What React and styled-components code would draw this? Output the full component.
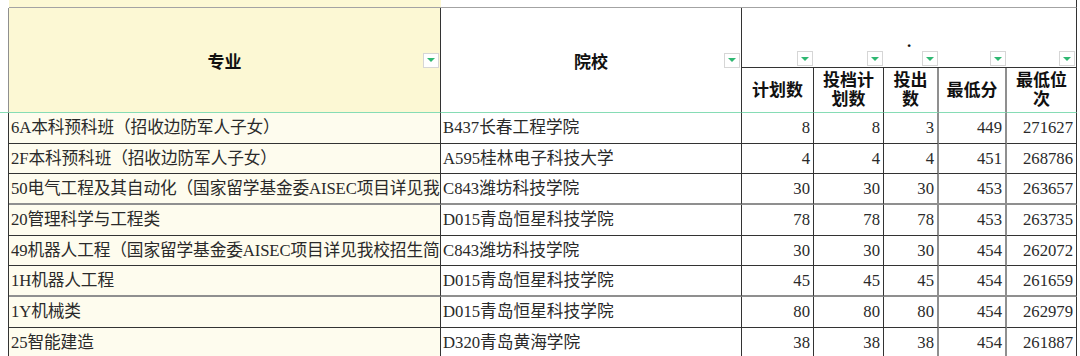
import React from "react";
import styled, { createGlobalStyle } from "styled-components";

const GlobalStyle = createGlobalStyle`
    body{
        margin: 0;
        background-color: #ffffff;
        overflow: hidden;
    }
`

const DARK = "#333333"
const SOFT = "#8f8f8f"
const GREEN = "#86dcb5"

const Sheet = styled.div`
    display: grid;
    grid-template-columns: 9px 432px 301px 72px 70px 55px 68px 70px;
    grid-template-rows: 8px 60px 45px repeat(8, 30.67px);
    font-family: "Liberation Serif", "Noto Sans CJK SC", serif;
    color: #2a2a2a;
`

const Gutter = styled.div`
    box-sizing: border-box;
    grid-row: span ${p => p.$rows || 1};
    border-right: 1px solid ${p => p.$line || "transparent"};
    border-bottom: ${p => p.$green ? `1px solid ${GREEN}` : "none"};
`

const Strip = styled.div`
    box-sizing: border-box;
    grid-column: span ${p => p.$cols || 1};
    background-color: ${p => p.$bg || "#ffffff"};
    border-bottom: 1px solid #a3a3a3;
    border-right: ${p => p.$end ? `1px solid ${DARK}` : "none"};
`

const TitleCell = styled.div`
    box-sizing: border-box;
    grid-row: span 2;
    display: grid;
    grid-template-columns: 17px 1fr 17px;
    align-items: center;
    background-color: ${p => p.$bg || "#ffffff"};
    border-right: 1px solid ${DARK};
    border-bottom: 1px solid ${GREEN};
    font-size: 17px;
    font-weight: bold;
    color: #111111;

    span{
        grid-column: 2;
        text-align: center;
    }
`

const FilterButton = styled.div`
    box-sizing: border-box;
    width: 16px;
    height: 15px;
    margin-right: 1px;
    justify-self: end;
    border: 1px solid #d6d6d6;
    background-color: #ffffff;
    display: flex;
    align-items: center;
    justify-content: center;

    &::after{
        content: "";
        border-left: 4px solid transparent;
        border-right: 4px solid transparent;
        border-top: 4px solid #2fb872;
    }
`

const MergedHead = styled.div`
    box-sizing: border-box;
    grid-column: span 5;
    display: flex;
    flex-direction: column;
    border-right: 1px solid ${DARK};
    border-bottom: 1px solid ${DARK};

    .dot{
        flex: 1;
        display: flex;
        align-items: flex-end;
        justify-content: center;
        font-size: 17px;
        font-weight: bold;
        line-height: 19px;
        color: #111111;
    }
`

const FilterRow = styled.div`
    display: grid;
    grid-template-columns: 72px 70px 55px 68px 69px;
    padding-bottom: 1px;
`

const SubHead = styled.div`
    box-sizing: border-box;
    display: flex;
    align-items: center;
    justify-content: center;
    text-align: center;
    padding: 0 3px;
    border-right: ${p => p.$soft ? `2px solid ${SOFT}` : `1px solid ${DARK}`};
    border-bottom: 1px solid ${GREEN};
    font-size: 17px;
    font-weight: bold;
    line-height: 19px;
    color: #111111;
`

const Cell = styled.div`
    box-sizing: border-box;
    display: flex;
    align-items: center;
    justify-content: ${p => p.$num ? "flex-end" : "flex-start"};
    padding: ${p => p.$num ? "1px 3px 0 0" : "1px 0 0 2px"};
    overflow: hidden;
    white-space: nowrap;
    letter-spacing: ${p => p.$cream ? "-0.12px" : "normal"};
    background-color: ${p => p.$cream ? "#fefcee" : "#ffffff"};
    border-right: ${p => p.$soft ? `2px solid ${SOFT}` : `1px solid ${DARK}`};
    border-bottom: ${p => p.$softRow ? `2px solid ${SOFT}` : `1px solid ${DARK}`};
    font-size: 16.7px;
    line-height: 1;
`

const subHeads = ["计划数", "投档计划数", "投出数", "最低分", "最低位次"]
const softCols = [false, false, true, true, false]

// long names are shown only as far as the column lets them
const rows = [
    ["6A本科预科班（招收边防军人子女）", "B437长春工程学院", 8, 8, 3, 449, 271627],
    ["2F本科预科班（招收边防军人子女）", "A595桂林电子科技大学", 4, 4, 4, 451, 268786],
    ["50电气工程及其自动化（国家留学基金委AISEC项目详见我", "C843潍坊科技学院", 30, 30, 30, 453, 263657],
    ["20管理科学与工程类", "D015青岛恒星科技学院", 78, 78, 78, 453, 263735],
    ["49机器人工程（国家留学基金委AISEC项目详见我校招生简", "C843潍坊科技学院", 30, 30, 30, 454, 262072],
    ["1H机器人工程", "D015青岛恒星科技学院", 45, 45, 45, 454, 261659],
    ["1Y机械类", "D015青岛恒星科技学院", 80, 80, 80, 454, 262979],
    ["25智能建造", "D320青岛黄海学院", 38, 38, 38, 454, 261887],
]

export default function App() {
    return (
        <>
            <GlobalStyle />
            <Sheet>
                <Gutter />
                <Strip $bg="#fcf8d4" />
                <Strip $cols={5} />
                <Strip $end />

                <Gutter $rows={2} $line={SOFT} $green />
                <TitleCell $bg="#fcf8d4">
                    <span>专业</span>
                    <FilterButton />
                </TitleCell>
                <TitleCell>
                    <span>院校</span>
                    <FilterButton />
                </TitleCell>
                <MergedHead>
                    <div className="dot">.</div>
                    <FilterRow>
                        {subHeads.map(h => <FilterButton key={h} />)}
                    </FilterRow>
                </MergedHead>
                {subHeads.map((h, i) => (
                    <SubHead key={h} $soft={softCols[i]}>{h}</SubHead>
                ))}

                {rows.map((r, ri) => {
                    const softRow = ri === 2 || ri === 5
                    return (
                        <React.Fragment key={ri}>
                            <Gutter $line={DARK} />
                            <Cell $cream $softRow={softRow}>{r[0]}</Cell>
                            <Cell $softRow={softRow}>{r[1]}</Cell>
                            {r.slice(2).map((n, ci) => (
                                <Cell key={ci} $num $soft={softCols[ci]} $softRow={softRow}>{n}</Cell>
                            ))}
                        </React.Fragment>
                    )
                })}
            </Sheet>
        </>
    )
}
